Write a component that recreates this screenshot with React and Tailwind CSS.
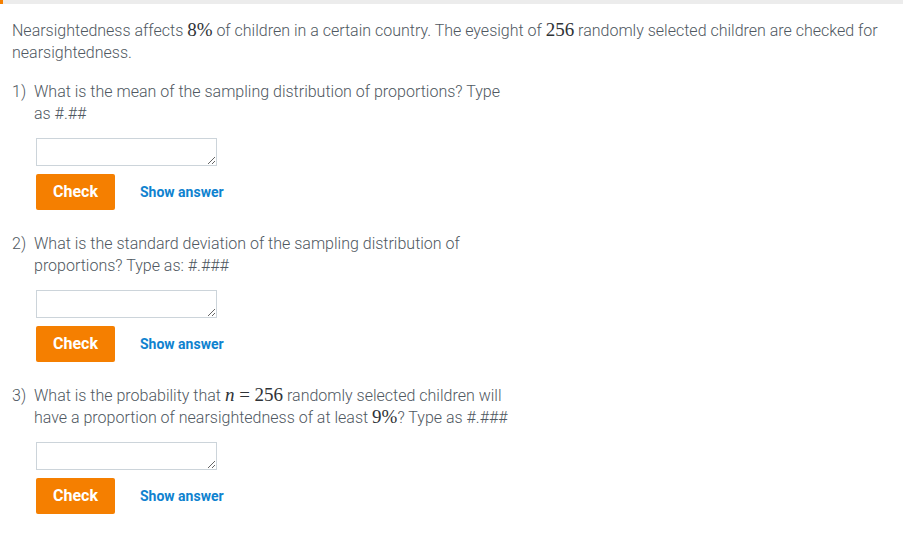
import React from "react";

const M = ({ children }) => (
  <span className="font-['Liberation_Serif','DejaVu_Serif',serif] text-[19px] leading-[20px] text-[#2f3337]">{children}</span>
);

function Question({ num, children }) {
  return (
    <div className="mt-[23px] first:mt-0">
      <div className="flex">
        <span className="w-[22px] shrink-0">{num})</span>
        <p className="max-w-[482px]">{children}</p>
      </div>
      <div className="pl-[24px]">
        <textarea className="mt-[13px] block h-[28px] w-[181px] resize-y border border-[#ccd4da] bg-white" />
        <div className="mt-[8px] flex items-center">
          <button className="h-[36px] w-[79px] rounded-[2px] bg-[#f57f00] text-[16px] font-bold text-white">
            Check
          </button>
          <a href="#" className="ml-[25px] text-[14px] font-bold text-[#0e82cf]">
            Show answer
          </a>
        </div>
      </div>
    </div>
  );
}

export default function App() {
  return (
    <div className="min-h-screen bg-white font-['Roboto',sans-serif] text-[16px] font-light leading-[22px] text-[#4f5861]">
      <div className="flex h-[4px] bg-[#ececec]">
        <div className="w-[3px] bg-[#f57f00]" />
      </div>
      <div className="px-[12px] pt-[16px]">
        <p>
          Nearsightedness affects <M>8%</M> of children in a certain country. The eyesight of <M>256</M> randomly
          selected children are checked for nearsightedness.
        </p>
        <div className="mt-[17px]">
          <Question num="1">What is the mean of the sampling distribution of proportions? Type as #.##</Question>
          <Question num="2">
            What is the standard deviation of the sampling distribution of proportions? Type as: #.###
          </Question>
          <Question num="3">
            What is the probability that <M><i>n</i> = 256</M> randomly selected children will have a proportion of
            nearsightedness of at least <M>9%</M>? Type as #.###
          </Question>
        </div>
      </div>
    </div>
  );
}
